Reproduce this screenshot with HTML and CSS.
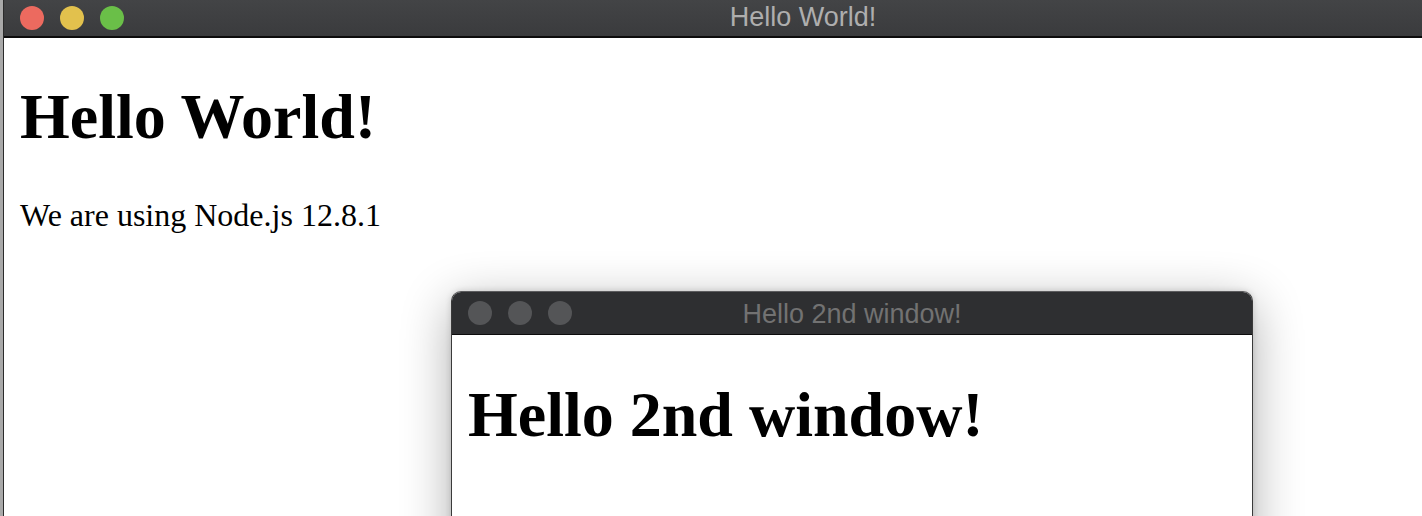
FILE: index.html
```html
<!DOCTYPE html>
<html>
<head>
<meta charset="utf-8">
<title>Hello World!</title>
<link rel="stylesheet" href="styles.css">
</head>
<body>
<div class="desktop">
  <div class="window main-window">
    <div class="titlebar">
      <div class="lights">
        <span class="light red"></span>
        <span class="light yellow"></span>
        <span class="light green"></span>
      </div>
      <div class="title">Hello World!</div>
      <div></div>
    </div>
    <div class="content">
      <h1>Hello World!</h1>
      <p>We are using Node.js 12.8.1</p>
    </div>
  </div>

  <div class="window second-window">
    <div class="titlebar dark">
      <div class="lights">
        <span class="light off"></span>
        <span class="light off"></span>
        <span class="light off"></span>
      </div>
      <div class="title">Hello 2nd window!</div>
      <div></div>
    </div>
    <div class="content">
      <h1>Hello 2nd window!</h1>
    </div>
  </div>
</div>
</body>
</html>
```

FILE: styles.css
```css
html, body {
  margin: 0;
  padding: 0;
}
body {
  background: #a9a9a9;
  width: 1422px;
  height: 516px;
  overflow: hidden;
}
.desktop {
  position: relative;
  width: 1422px;
  height: 516px;
  overflow: hidden;
}
.window {
  display: flex;
  flex-direction: column;
  background: #fff;
}
.main-window {
  margin-left: 3px;
  width: 1598px;
  height: 516px;
  border-left: 1px solid #2b2b2b;
}
.titlebar {
  display: grid;
  grid-template-columns: 1fr auto 1fr;
  align-items: center;
  height: 36px;
  background: linear-gradient(#434446, #3a3b3d);
  border-bottom: 2px solid #0c0c0c;
  flex: none;
}
.lights {
  display: flex;
  gap: 16px;
  padding-left: 16px;
}
.light {
  width: 24px;
  height: 24px;
  border-radius: 50%;
  display: block;
}
.red { background: #ec6a5f; }
.yellow { background: #e2c14d; }
.green { background: #6abf48; }
.off { background: #545557; }
.title {
  font-family: "Liberation Sans", Arial, sans-serif;
  font-size: 27px;
  line-height: 32px;
  padding-bottom: 2px;
  color: #aeaeae;
  white-space: nowrap;
}
.content {
  padding: 0 16px;
  font-family: "Liberation Serif", "Times New Roman", serif;
  color: #000;
}
.content h1 {
  font-size: 64px;
  font-weight: bold;
  margin: 42px 0 43px;
}
.content p {
  font-size: 32px;
  margin: 32px 0;
}
.second-window {
  position: absolute;
  left: 451px;
  top: 291px;
  width: 800px;
  height: 300px;
  border: 1px solid #3a3a3a;
  border-top: 1px solid #5c5c5e;
  border-radius: 10px 10px 0 0;
  box-shadow: 0 12px 50px rgba(0, 0, 0, 0.32), 0 0 6px rgba(0, 0, 0, 0.15);
}
.titlebar.dark {
  height: 42px;
  background: #2e2f31;
  border-radius: 9px 9px 0 0;
  border-bottom: 1px solid #0c0c0c;
}
.titlebar.dark .title {
  color: #727272;
  padding-bottom: 0;
  padding-top: 2px;
}
.second-window .content {
  padding: 0 16px;
}
.second-window .content h1 {
  margin-top: 43px;
}
```
